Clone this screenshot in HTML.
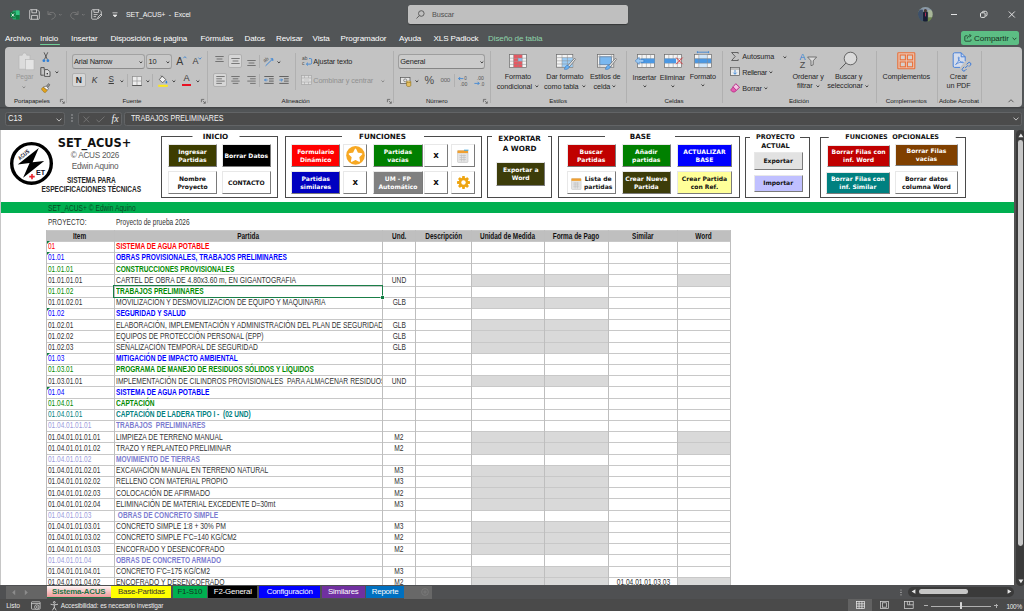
<!DOCTYPE html>
<html lang="es"><head><meta charset="utf-8"><title>SET_ACUS+ - Excel</title>
<style>
html,body{margin:0;padding:0}
body{width:1024px;height:611px;overflow:hidden;background:#525557;position:relative;font-family:"Liberation Sans",sans-serif;font-size:8px;color:#fff}
div,span{box-sizing:border-box}
.abs{position:absolute}
#titlebar{position:absolute;left:0;top:0;width:1024px;height:30px;background:#525557}
#search{position:absolute;left:407.5px;top:5px;width:220.5px;height:18.8px;background:#bfbfbf;border-radius:2.5px;box-shadow:0 1px 1px rgba(0,0,0,.35)}
#search span{position:absolute;left:24.5px;top:5px;font-size:7.3px;color:#505050;letter-spacing:-.1px}
.tt{position:absolute;white-space:nowrap;line-height:1}
#tabs .tt{top:35px;font-size:8.1px;color:#fff;letter-spacing:-.12px}
#ribbon{position:absolute;left:4.7px;top:47px;width:1017.3px;height:59.7px;background:#c3c3c3;border-radius:4px}
#rb .sep{position:absolute;top:50.5px;width:1px;height:52.5px;background:#b0b0b0}
#rb{position:absolute;left:0;top:0;width:1024px;height:110px}
#rb .lbl{position:absolute;top:98px;font-size:6.2px;color:#222;white-space:nowrap;transform:translateX(-50%);line-height:1;letter-spacing:-.05px}
#rb .t{position:absolute;font-size:7.25px;color:#262626;white-space:nowrap;line-height:1;letter-spacing:-.1px}
#rb .tc{position:absolute;font-size:7.25px;color:#262626;white-space:nowrap;line-height:1;transform:translateX(-50%);letter-spacing:-.1px;text-align:center}
#rb .dis{color:#8c8c8c}
#rb .box{position:absolute;background:#c8c8c8;border:1px solid #a2a2a2;border-radius:3px}
#rb .hi{position:absolute;background:#d6d6d6;border:1px solid #b0b0b0;border-radius:2px}
#rb svg{position:absolute;overflow:visible}
#fbar{position:absolute;left:0;top:107px;width:1024px;height:23px;background:linear-gradient(#3e4042,#515456 2.5px)}
#fbar .fb{position:absolute;top:4.8px;height:13.8px;background:#4b4b4b;border:1px solid #626466;border-radius:2.5px}
#sheet{position:absolute;left:1px;top:129.8px;width:1013.1px;height:456px;background:#fff;overflow:hidden}
#sheet>*{margin-left:-1px;margin-top:-129.8px}
#grid{position:absolute;left:0;top:0}
#greenbar{position:absolute;left:0;top:201.6px;width:1015px;height:11.6px;background:#00af50}
.nar{display:inline-block;transform:scaleX(.775);transform-origin:0 50%;white-space:nowrap}
.hrow{position:absolute;background:#bfbfbf}
.hc{position:absolute;text-align:center;font-size:8.3px;font-weight:bold;color:#111;line-height:12.4px;white-space:nowrap;overflow:hidden}
.hc span{display:inline-block;transform:scaleX(.775);transform-origin:50% 50%}
.gc{position:absolute;background:#d9d9d9}
.hl{position:absolute;height:1px;background:#c8c8c8}
.vl{position:absolute;width:1px;background:#bebebe}
.ci,.cp,.cu,.cs{position:absolute;height:11.2px;line-height:11.9px;font-size:8.3px;color:#323232;white-space:nowrap;clip-path:inset(-3px 0 -3px 0)}
.ci{left:48px;width:65.5px}
.cp{left:116px;width:266px}
.cu{left:383px;width:32px;text-align:center}
.cs{left:609px;width:68px;text-align:center}
.ci span,.cp span{display:inline-block;transform:translateY(.4px) scaleX(.782);transform-origin:0 50%}
.cp span{transform:translateY(.4px) scaleX(.792)}
.cp.l0 span{transform:translateY(.4px) scaleX(.816)}
.cu span,.cs span{display:inline-block;transform:translateY(.4px) scaleX(.8);transform-origin:50% 50%}
.cp.l1,.cp.l2,.cp.l3,.cp.l4,.cp.l5{font-weight:bold}
.l1{color:#ff0000}.l2{color:#0000ff}.l3{color:#008a00}.l4{color:#008080}.l5{color:#7b7bd0}
.ci.l5{color:#9c9cdc}
.tri{position:absolute;left:46.5px;width:0;height:0;border-top:3px solid #107c41;border-right:3px solid transparent}
.sel{position:absolute;border:1.1px solid #1a7f48}
.selh{position:absolute;width:2.8px;height:2.8px;background:#107c41;box-shadow:0 0 0 .5px #fff}
/* form controls */
.grp{position:absolute;border:1px solid #4a4a4a}
.gl{position:absolute;background:#fff;font-family:"DejaVu Sans","Liberation Sans",sans-serif;font-weight:bold;font-size:7.2px;color:#111;text-align:center;line-height:9px;white-space:nowrap;transform:translateX(-50%)}
.btn{position:absolute;font-family:"DejaVu Sans","Liberation Sans",sans-serif;font-weight:bold;font-size:6.05px;line-height:8px;color:#fff;text-align:center;display:flex;align-items:center;justify-content:center;border-top:1px solid #e8e8e8;border-left:1px solid #e8e8e8;border-right:1.5px solid #7a7a7a;border-bottom:1.5px solid #7a7a7a;white-space:nowrap}
.btn.w{background:#fff;color:#111}
#sbar{position:absolute;left:0;top:585.3px;width:1024px;height:13.5px;background:#4f5052}
.stab{position:absolute;top:586px;height:11.6px;font-size:7.9px;line-height:11.4px;text-align:center;white-space:nowrap;color:#fff;letter-spacing:-.2px}
#vscroll{position:absolute;left:1014.4px;top:129.6px;width:9.6px;height:456px;background:#525252}

</style></head>
<body>
<div id="titlebar">
<svg class="abs" style="left:10px;top:9.5px" width="10" height="10" viewBox="0 0 10 10"><rect x="2.5" y=".5" width="7" height="9" rx="1" fill="#21a366"/><rect x="6" y=".5" width="3.5" height="4.5" fill="#33c481"/><rect x="6" y="5" width="3.5" height="4.5" fill="#107c41"/><rect x="0" y="2.2" width="5.6" height="5.6" rx=".8" fill="#107c41"/><path d="M1.6 3.6 L4 6.5 M4 3.6 L1.6 6.5" stroke="#fff" stroke-width=".9"/></svg>
<svg class="abs" style="left:29px;top:9px" width="11" height="11" viewBox="0 0 11 11" fill="none" stroke="#dedede" stroke-width=".8"><path d="M.7 1.6a.9.9 0 0 1 .9-.9h6.6l2.1 2.1v6.6a.9.9 0 0 1-.9.9H1.6a.9.9 0 0 1-.9-.9z"/><path d="M2.9.8v3h4.6v-3M2.6 10.2V6.4h5.8v3.8"/></svg>
<svg class="abs" style="left:47px;top:10px" width="40" height="10" viewBox="0 0 40 10" fill="none" stroke="#7a7a7a" stroke-width=".9"><path d="M1 1v3.5h3.5M1.2 4.3C3 1.6 7.8 1.6 8.3 5.2 8.5 7 7 8.5 4.5 9.4"/><path d="M12 4l1.3 1.3L14.6 4"/><path d="M31 1v3.5h-3.5M30.8 4.3C29 1.6 24.2 1.6 23.7 5.2 23.5 7 25 8.5 27.5 9.4"/><path d="M35 4l1.3 1.3L37.6 4"/></svg>
<svg class="abs" style="left:91px;top:9px" width="11" height="11" viewBox="0 0 11 11" fill="none" stroke="#dedede" stroke-width=".8"><path d="M6 10.2H1.6a.9.9 0 0 1-.9-.9V1.6a.9.9 0 0 1 .9-.9h6.6l2.1 2.1v2.5"/><path d="M2.9.8v2.6h4.6V.8M2.6 5.6h4M2.6 7.6h2.5M6.5 9.8l.5-1.8 3-3 1 1-3 3z"/></svg>
<svg class="abs" style="left:111.5px;top:12px" width="6" height="6" viewBox="0 0 6 6" fill="none" stroke="#dedede" stroke-width=".8"><path d="M.5.8h5M1 3l2 2 2-2z" fill="#f0f0f0"/></svg>
<div class="tt" style="left:126px;top:11px;font-size:7px;color:#f4f4f4;letter-spacing:-.2px">SET_ACUS+ &nbsp;-&nbsp; Excel</div>
<div id="search"><svg class="abs" style="left:8.5px;top:5px" width="9" height="9" viewBox="0 0 9 9" fill="none" stroke="#555" stroke-width=".9"><circle cx="5.3" cy="3.5" r="2.8"/><path d="M3.3 5.6L.5 8.5"/></svg><span>Buscar</span></div>
<svg class="abs" style="left:918px;top:7.1px" width="14.8" height="14.8" viewBox="0 0 14 14"><defs><clipPath id="av"><circle cx="7" cy="7" r="7"/></clipPath></defs><g clip-path="url(#av)"><rect width="14" height="14" fill="#5f7458"/><rect x="0" y="0" width="14" height="4.5" fill="#8a98a8"/><rect x="0" y="2.5" width="4.6" height="11.5" fill="#3d4f6a"/><rect x="9.6" y="3" width="4.4" height="7" fill="#a9b79a"/><rect x="9.6" y="10" width="4.4" height="4" fill="#6f8a4a"/><rect x="4.8" y="4.6" width="4.4" height="9.4" rx="1" fill="#171d36"/><circle cx="7" cy="3.5" r="1.5" fill="#4a3a34"/><rect x="6.7" y="5.3" width=".8" height="3.6" fill="#c8305a"/></g></svg>
<svg class="abs" style="left:950px;top:10px" width="70" height="10" viewBox="0 0 70 10" fill="none" stroke="#f4f4f4" stroke-width=".9"><path d="M1 4.5h6"/><rect x="30.5" y="2.8" width="4.6" height="4.6" rx="1"/><path d="M32 2.6c.2-1 .8-1.3 1.6-1.3h1.9c1 0 1.5.6 1.5 1.5v1.9c0 .9-.5 1.4-1.3 1.5"/><path d="M58.8 1.5l6 6M64.8 1.5l-6 6"/></svg>
</div>
<div id="tabs">
<div class="tt" style="left:5px">Archivo</div>
<div class="tt" style="left:40px">Inicio</div>
<div class="abs" style="left:40px;top:44.2px;width:19.5px;height:1.3px;background:#6fcf97;border-radius:1px"></div>
<div class="tt" style="left:71px">Insertar</div>
<div class="tt" style="left:110.5px">Disposición de página</div>
<div class="tt" style="left:200.5px">Fórmulas</div>
<div class="tt" style="left:244.5px">Datos</div>
<div class="tt" style="left:276px">Revisar</div>
<div class="tt" style="left:312.5px">Vista</div>
<div class="tt" style="left:340.5px">Programador</div>
<div class="tt" style="left:399px">Ayuda</div>
<div class="tt" style="left:433.5px">XLS Padlock</div>
<div class="tt" style="left:488px;color:#8fd4aa">Diseño de tabla</div>
<div class="abs" style="left:961px;top:30.5px;width:58px;height:14.5px;background:#5cbe84;border-radius:2.5px"></div>
<svg class="abs" style="left:963.8px;top:33px" width="9" height="9" viewBox="0 0 9 9" fill="none" stroke="#1c3a28" stroke-width=".8"><path d="M3.5 2.8H1.6a.8.8 0 0 0-.8.8v3.8a.8.8 0 0 0 .8.8h4.6a.8.8 0 0 0 .8-.8V6.3"/><path d="M3.2 5.6c.3-2 1.6-2.9 3.4-2.9M5.4 1l1.6 1.7-1.6 1.7"/></svg>
<div class="tt" style="left:974.1px;top:34.7px;font-size:8.1px;color:#16301f;letter-spacing:-.1px">Compartir</div>
<svg class="abs" style="left:1012px;top:36.5px" width="5" height="4" viewBox="0 0 5 4" fill="none" stroke="#16301f" stroke-width=".8"><path d="M.6.8l1.9 1.9L4.4.8"/></svg>
</div>
<div id="ribbon"></div>
<div id="rb">
<svg width="0" height="0" style="position:absolute"><defs>
<path id="chv" d="M.5.5l1.4 1.4L3.3.5" fill="none" stroke="#303030" stroke-width=".95"/>
<g id="lnch" fill="none" stroke="#555" stroke-width=".7"><path d="M.4 3.2V.4h2.8"/><path d="M1.8 1.8l2.4 2.4M4.3 2.4v1.9H2.4" /></g>
</defs></svg>
<!-- Portapapeles -->
<svg style="left:17.5px;top:52px" width="17" height="19" viewBox="0 0 17 19"><path d="M1 3.2h3.3c.2-1.6 1-2.3 2.2-2.3s2 .7 2.2 2.3H12v14H1z" fill="#dcdcdc" stroke="#b4b4b4" stroke-width=".6"/><rect x="7.4" y="7.6" width="8.6" height="10.2" fill="#e4e4e4" stroke="#b4b4b4" stroke-width=".6"/></svg>
<div class="tc dis" style="left:24.6px;top:73.8px;font-size:6.7px;color:#969696">Pegar</div>
<svg style="left:22.4px;top:85.6px" width="4" height="3" viewBox="0 0 4 3"><use href="#chv" style="opacity:.45"/></svg>
<svg style="left:42px;top:51.8px" width="8" height="11" viewBox="0 0 8 11"><path d="M2 .3l3.4 7.2M5.8.3L2.4 7.5" stroke="#3a3a3a" stroke-width=".75" fill="none"/><circle cx="1.9" cy="8.7" r="1.4" fill="#2f7fd6"/><circle cx="5.9" cy="8.7" r="1.4" fill="#2f7fd6"/></svg>
<svg style="left:40px;top:67px" width="11" height="10" viewBox="0 0 11 10" fill="none" stroke="#3a3a3a" stroke-width=".8"><path d="M3.8 8.2H.8V.6h3.4v2"/><path d="M4.6 2.6h3.2l2.2 2.2v4.6H4.6z" fill="#d8d8d8"/><rect x="6.6" y="6" width="1.4" height="1.4" fill="#3a3a3a" stroke="none"/></svg>
<svg style="left:54.8px;top:71.3px" width="4" height="3" viewBox="0 0 4 3"><use href="#chv"/></svg>
<svg style="left:41px;top:82.5px" width="10" height="10" viewBox="0 0 10 10"><path d="M7.6.6l1.2 1.2-1.9 2.8-1.6-1.2z" fill="#9a9a9a" stroke="#4a4a4a" stroke-width=".6"/><path d="M2.2 4.2l3.2-1.2 2 2.6-1.2 1.8z" fill="#f4f4f4" stroke="#4a4a4a" stroke-width=".6"/><path d="M.4 5.8l1.8-1.6 4 3.2-2 2.3c-1.6-.5-3-2-3.8-3.9z" fill="#e3a21a" stroke="#8a6410" stroke-width=".5"/></svg>
<div class="lbl" style="left:31.9px">Portapapeles</div>
<svg style="left:60.3px;top:98.6px" width="5" height="5" viewBox="0 0 5 5"><use href="#lnch"/></svg>
<div class="sep" style="left:66px"></div>
<!-- Fuente -->
<div class="box" style="left:71.5px;top:54.4px;width:73px;height:14.2px;border-bottom-color:#8c8c8c"></div>
<div class="t" style="left:74px;top:57.8px;font-size:7.4px;letter-spacing:-.2px">Arial Narrow</div>
<svg style="left:139.2px;top:60.6px" width="4" height="3" viewBox="0 0 4 3"><use href="#chv"/></svg>
<div class="box" style="left:146.3px;top:54.4px;width:25.4px;height:14.2px;border-bottom-color:#8c8c8c"></div>
<div class="t" style="left:148.4px;top:57.8px;font-size:7.4px">10</div>
<svg style="left:166.2px;top:60.6px" width="4" height="3" viewBox="0 0 4 3"><use href="#chv"/></svg>
<div class="t" style="left:176.2px;top:55.6px;font-size:10.5px;color:#3a3a3a">A</div>
<svg style="left:183.4px;top:56.2px" width="4" height="3" viewBox="0 0 4 3"><path d="M.4 2.2L1.9.6l1.5 1.6" fill="none" stroke="#2f7fd6" stroke-width=".8"/></svg>
<div class="t" style="left:192.4px;top:57px;font-size:9px;color:#3a3a3a">A</div>
<svg style="left:198.2px;top:56.6px" width="4" height="3" viewBox="0 0 4 3"><path d="M.4.6l1.5 1.6L3.4.6" fill="none" stroke="#2f7fd6" stroke-width=".8"/></svg>
<div class="hi" style="left:71.5px;top:73.2px;width:14.8px;height:14px"></div>
<div class="t" style="left:75.8px;top:76px;font-size:8.5px;font-weight:bold;color:#2a2a2a">N</div>
<div class="t" style="left:91.8px;top:76px;font-size:8.5px;font-style:italic;color:#3a3a3a">K</div>
<div class="t" style="left:108.5px;top:76px;font-size:8.2px;color:#3a3a3a;text-decoration:underline">S</div>
<svg style="left:119.5px;top:79.6px" width="4" height="3" viewBox="0 0 4 3"><use href="#chv"/></svg>
<div class="sep" style="left:127px;top:74px;height:13px"></div>
<svg style="left:131.5px;top:75.5px" width="10" height="10" viewBox="0 0 10 10" fill="none"><rect x=".5" y=".5" width="9" height="9" fill="#ececec" stroke="#8c8c8c" stroke-width=".7"/><path d="M5 .5v9M.5 5h9" stroke="#9a9a9a" stroke-width=".7"/><path d="M.2 9.5h9.6" stroke="#444" stroke-width=".8"/></svg>
<svg style="left:145.8px;top:79.6px" width="4" height="3" viewBox="0 0 4 3"><use href="#chv"/></svg>
<div class="sep" style="left:152px;top:74px;height:13px"></div>
<svg style="left:157.5px;top:74.5px" width="10" height="12" viewBox="0 0 10 12"><path d="M4.2 1l3.6 3.6-3.2 3.2L1.4 4.6z" fill="#f2f2f2" stroke="#4a4a4a" stroke-width=".8" stroke-linejoin="round"/><path d="M3 .6l1.6 1.6" stroke="#4a4a4a" stroke-width=".8"/><path d="M8.4 5.6c.6.9.9 1.4.9 1.9a.9.9 0 0 1-1.8 0c0-.5.3-1 .9-1.9z" fill="#2f7fd6"/><rect x=".2" y="9.8" width="9.6" height="2" fill="#ffe81a"/></svg>
<svg style="left:171.5px;top:79.6px" width="4" height="3" viewBox="0 0 4 3"><use href="#chv"/></svg>
<div class="t" style="left:183.6px;top:74.2px;font-size:9.2px;color:#3a3a3a">A</div>
<div class="abs" style="left:181.8px;top:84.3px;width:9.6px;height:2px;background:#e81123"></div>
<svg style="left:196.3px;top:79.6px" width="4" height="3" viewBox="0 0 4 3"><use href="#chv"/></svg>
<div class="lbl" style="left:132px">Fuente</div>
<svg style="left:200.8px;top:98.6px" width="5" height="5" viewBox="0 0 5 5"><use href="#lnch"/></svg>
<div class="sep" style="left:207px"></div>
<!-- Alineacion -->
<svg style="left:215.2px;top:56px" width="9" height="7" viewBox="0 0 9 7" stroke="#505050" stroke-width=".7"><path d="M.3.5h8.4M1.6 3h5.8M.3 5.5h8.4"/></svg>
<div class="hi" style="left:228.3px;top:54.2px;width:14px;height:14px"></div>
<svg style="left:230.8px;top:57.8px" width="9" height="7" viewBox="0 0 9 7" stroke="#505050" stroke-width=".7"><path d="M.3.5h8.4M1.6 3h5.8M.3 5.5h8.4"/></svg>
<svg style="left:247px;top:60px" width="9" height="7" viewBox="0 0 9 7" stroke="#505050" stroke-width=".7"><path d="M.3.5h8.4M1.6 3h5.8M.3 5.5h8.4"/></svg>
<div class="sep" style="left:259px;top:55px;height:13px"></div>
<svg style="left:263px;top:55.5px" width="12" height="11" viewBox="0 0 12 11" fill="none"><text x=".2" y="5.2" font-family="Liberation Sans, sans-serif" font-size="5" fill="#4a4a4a" transform="rotate(-35 3 4)">ab</text><path d="M2.6 9.8L9.6 3" stroke="#2f7fd6" stroke-width=".9"/><path d="M7.6 2.8h2.2V5" stroke="#2f7fd6" stroke-width=".9"/></svg>
<svg style="left:276.6px;top:60.6px" width="4" height="3" viewBox="0 0 4 3"><use href="#chv"/></svg>
<div class="hi" style="left:212.8px;top:73.2px;width:14.4px;height:14px"></div>
<svg style="left:215.5px;top:76.2px" width="9" height="8" viewBox="0 0 9 8" stroke="#505050" stroke-width=".7"><path d="M.3.5h8.4M.3 2.8h5.6M.3 5.1h8.4M.3 7.4h5.6"/></svg>
<svg style="left:231.3px;top:76.2px" width="9" height="8" viewBox="0 0 9 8" stroke="#505050" stroke-width=".7"><path d="M.3.5h8.4M1.7 2.8h5.6M.3 5.1h8.4M1.7 7.4h5.6"/></svg>
<svg style="left:247px;top:76.2px" width="9" height="8" viewBox="0 0 9 8" stroke="#505050" stroke-width=".7"><path d="M.3.5h8.4M3.1 2.8h5.6M.3 5.1h8.4M3.1 7.4h5.6"/></svg>
<div class="sep" style="left:259px;top:74px;height:13px"></div>
<svg style="left:263.5px;top:76.2px" width="10" height="8" viewBox="0 0 10 8" fill="none"><path d="M.3.5h9.4M5 2.8h4.7M5 5.1h4.7M.3 7.4h9.4" stroke="#4a4a4a" stroke-width=".8"/><path d="M3.6 4H.6M1.9 2.6L.5 4l1.4 1.4" stroke="#2f7fd6" stroke-width=".8"/></svg>
<svg style="left:279.3px;top:76.2px" width="10" height="8" viewBox="0 0 10 8" fill="none"><path d="M.3.5h9.4M5 2.8h4.7M5 5.1h4.7M.3 7.4h9.4" stroke="#4a4a4a" stroke-width=".8"/><path d="M.4 4h3M2.1 2.6L3.5 4 2.1 5.4" stroke="#2f7fd6" stroke-width=".8"/></svg>
<div class="sep" style="left:294.5px;top:53px;height:37px"></div>
<svg style="left:302px;top:56px" width="10" height="11" viewBox="0 0 10 11" fill="none"><text x="0" y="4.2" font-family="Liberation Sans, sans-serif" font-size="4.8" fill="#4a4a4a">ab</text><text x="0" y="9.3" font-family="Liberation Sans, sans-serif" font-size="4.8" fill="#4a4a4a">c</text><path d="M7 2.5h1.4a1.3 1.3 0 0 1 1.3 1.3v3a1.3 1.3 0 0 1-1.3 1.3H4.6M6 6.6L4.4 8.1 6 9.6" stroke="#2f7fd6" stroke-width=".8"/></svg>
<div class="t" style="left:313.3px;top:58px">Ajustar texto</div>
<svg style="left:301.3px;top:75.2px" width="11" height="10" viewBox="0 0 11 10" fill="none"><rect x=".5" y=".5" width="10" height="9" fill="#dcdcdc" stroke="#a6a6a6" stroke-width=".7"/><path d="M.5 3h10M.5 7h10M3.5.5V3M7.5.5V3M3.5 7v2.5M7.5 7v2.5" stroke="#a6a6a6" stroke-width=".6"/><path d="M3 5h5" stroke="#bbb" stroke-width=".7"/></svg>
<div class="t dis" style="left:313.3px;top:77.2px;color:#909090">Combinar y centrar</div>
<svg style="left:381.4px;top:79.6px" width="4" height="3" viewBox="0 0 4 3"><use href="#chv" style="opacity:.45"/></svg>
<div class="lbl" style="left:295.6px">Alineación</div>
<svg style="left:386.8px;top:98.6px" width="5" height="5" viewBox="0 0 5 5"><use href="#lnch"/></svg>
<div class="sep" style="left:392.5px"></div>
<!-- Numero -->
<div class="box" style="left:398.3px;top:54.4px;width:87.2px;height:14.2px;background:#cbcbcb;border-color:#9e9e9e;border-bottom-color:#858585"></div>
<div class="t" style="left:400.3px;top:57.8px;font-size:7.4px;letter-spacing:-.2px">General</div>
<svg style="left:479.6px;top:60.6px" width="4" height="3" viewBox="0 0 4 3"><use href="#chv"/></svg>
<svg style="left:400px;top:76.5px" width="12" height="10" viewBox="0 0 12 10"><rect x=".4" y=".4" width="9.6" height="6" fill="#e4e4e4" stroke="#555" stroke-width=".7"/><circle cx="5.2" cy="3.4" r="1.5" fill="none" stroke="#555" stroke-width=".6"/><path d="M6.6 4.8h4.2v3.8c0 .5-.9.9-2.1.9s-2.1-.4-2.1-.9z" fill="#e8c060" stroke="#8a6a14" stroke-width=".6"/><ellipse cx="8.7" cy="4.8" rx="2.1" ry=".8" fill="#f6dc90" stroke="#8a6a14" stroke-width=".5"/></svg>
<svg style="left:414.7px;top:79.6px" width="4" height="3" viewBox="0 0 4 3"><use href="#chv"/></svg>
<div class="t" style="left:424.5px;top:74.9px;font-size:10.8px;color:#4c4c4c">%</div>
<div class="t" style="left:440.5px;top:77.4px;font-size:6.2px;color:#666;letter-spacing:-.3px">000</div>
<div class="sep" style="left:454px;top:74px;height:13px"></div>
<svg style="left:458px;top:75.5px" width="10" height="10" viewBox="0 0 10 10" fill="none"><text x="6.2" y="4.2" font-family="Liberation Sans, sans-serif" font-size="4.6" fill="#555">0</text><text x="2.2" y="9.6" font-family="Liberation Sans, sans-serif" font-size="4.6" fill="#555" textLength="7.2" lengthAdjust="spacingAndGlyphs">.00</text><path d="M5.4 2.6H.6M2.2 1L.6 2.6l1.6 1.6" stroke="#2f7fd6" stroke-width=".8"/></svg>
<svg style="left:473.5px;top:75.5px" width="10" height="10" viewBox="0 0 10 10" fill="none"><text x="2.8" y="4.2" font-family="Liberation Sans, sans-serif" font-size="4.6" fill="#555" textLength="7" lengthAdjust="spacingAndGlyphs">.00</text><text x="6.4" y="9.6" font-family="Liberation Sans, sans-serif" font-size="4.6" fill="#555">.0</text><path d="M.4 7.4h4.8M3.6 5.8l1.6 1.6-1.6 1.6" stroke="#2f7fd6" stroke-width=".8"/></svg>
<div class="lbl" style="left:436.8px">Número</div>
<svg style="left:483.3px;top:98.6px" width="5" height="5" viewBox="0 0 5 5"><use href="#lnch"/></svg>
<div class="sep" style="left:490px"></div>
<!-- Estilos -->
<svg style="left:509px;top:53.5px" width="18" height="14" viewBox="0 0 18 14"><rect x=".4" y=".4" width="17.2" height="13.2" fill="#f4f4f4" stroke="#6a6a6a" stroke-width=".7"/><rect x="4.6" y=".8" width="8.6" height="3.4" fill="#ea5560"/><rect x="4.6" y="4.2" width="4.4" height="3" fill="#ea5560"/><rect x="9" y="4.2" width="4.2" height="3" fill="#8cc0f0"/><rect x="4.6" y="7.2" width="8.6" height="6" fill="#ea5560"/><path d="M.4 4.2h17.2M.4 7.2h17.2M.4 10.4h17.2M4.6.4v13.2M9 .4v13.2M13.2.4v13.2" stroke="#8a8a8a" stroke-width=".5" fill="none"/></svg>
<div class="tc" style="left:517.9px;top:72.9px">Formato</div>
<div class="tc" style="left:514.4px;top:82.6px">condicional</div>
<svg style="left:534.8px;top:84.8px" width="4" height="3" viewBox="0 0 4 3"><use href="#chv"/></svg>
<svg style="left:556px;top:53.5px" width="20" height="17" viewBox="0 0 20 17"><rect x=".4" y=".4" width="16.4" height="12.8" fill="#f4f4f4" stroke="#6a6a6a" stroke-width=".7"/><rect x="6" y="3.6" width="10.6" height="9.4" fill="#9cccf4"/><path d="M.4 3.6h16.4M.4 6.8h16.4M.4 10h16.4M6 .4v12.8M11.4.4v12.8" stroke="#8a8a8a" stroke-width=".5" fill="none"/><path d="M18.6 4.2l-6.6 7.2 1.4 1.4 6.2-7.6z" fill="#e8e8e8" stroke="#555" stroke-width=".6"/><path d="M12 11.4c-1.6-.2-2.6.8-2.8 2.2-.1.8-.6 1.2-1.2 1.4 1.8 1 4.6.4 5.4-2.2z" fill="#6ab0ee" stroke="#2a6cb8" stroke-width=".5"/></svg>
<div class="tc" style="left:564.9px;top:72.9px">Dar formato</div>
<div class="tc" style="left:561.3px;top:82.6px">como tabla</div>
<svg style="left:581.6px;top:84.8px" width="4" height="3" viewBox="0 0 4 3"><use href="#chv"/></svg>
<svg style="left:596.5px;top:53.5px" width="20" height="17" viewBox="0 0 20 17"><rect x=".4" y=".4" width="16.4" height="12.8" fill="#f4f4f4" stroke="#6a6a6a" stroke-width=".7"/><rect x="2.8" y="2.8" width="11.6" height="8" fill="#7ab8f0" stroke="#2a6cb8" stroke-width=".5"/><path d="M2.8.4v12.8M14.4.4v12.8M.4 2.8h16.4M.4 10.8h16.4" stroke="#8a8a8a" stroke-width=".5" fill="none"/><path d="M18.6 4.2l-6.6 7.2 1.4 1.4 6.2-7.6z" fill="#e8e8e8" stroke="#555" stroke-width=".6"/><path d="M12 11.4c-1.6-.2-2.6.8-2.8 2.2-.1.8-.6 1.2-1.2 1.4 1.8 1 4.6.4 5.4-2.2z" fill="#6ab0ee" stroke="#2a6cb8" stroke-width=".5"/></svg>
<div class="tc" style="left:605.3px;top:72.9px">Estilos de</div>
<div class="tc" style="left:601.9px;top:82.6px">celda</div>
<svg style="left:612.3px;top:84.8px" width="4" height="3" viewBox="0 0 4 3"><use href="#chv"/></svg>
<div class="lbl" style="left:558.1px">Estilos</div>
<div class="sep" style="left:626.3px"></div>
<!-- Celdas -->
<svg style="left:634.5px;top:53.5px" width="20" height="14" viewBox="0 0 20 14"><rect x="2.4" y=".4" width="17.2" height="13.2" fill="#f4f4f4" stroke="#6a6a6a" stroke-width=".7"/><path d="M2.4 4.6h17.2M2.4 9.2h17.2M7 .4v13.2M11.4.4v13.2M15.6.4v13.2" stroke="#8a8a8a" stroke-width=".5" fill="none"/><rect x="6" y="4.6" width="13.6" height="4.6" fill="#4a98e4"/><path d="M.2 6.9l4-3.6v2.2h4.6v2.8H4.2v2.2z" fill="#9ccaf4" stroke="#2a6cb8" stroke-width=".5"/></svg>
<div class="tc" style="left:644.4px;top:73.6px">Insertar</div>
<svg style="left:642.6px;top:84.8px" width="4" height="3" viewBox="0 0 4 3"><use href="#chv"/></svg>
<svg style="left:663.8px;top:53.5px" width="19" height="14" viewBox="0 0 19 14"><rect x=".4" y=".4" width="17.2" height="13.2" fill="#f4f4f4" stroke="#6a6a6a" stroke-width=".7"/><path d="M.4 4.6h17.2M.4 9.2h17.2M4.8.4v13.2M9.2.4v13.2M13.4.4v13.2" stroke="#8a8a8a" stroke-width=".5" fill="none"/><rect x=".4" y="4.6" width="11.6" height="4.6" fill="#4a98e4"/><path d="M12.2 3.6l6.4 6.6M18.6 3.6l-6.4 6.6" stroke="#d8343c" stroke-width="1" fill="none"/></svg>
<div class="tc" style="left:672.4px;top:73.6px">Eliminar</div>
<svg style="left:670.6px;top:84.8px" width="4" height="3" viewBox="0 0 4 3"><use href="#chv"/></svg>
<svg style="left:694px;top:50.5px" width="18" height="17" viewBox="0 0 18 17"><path d="M3.4 1.2h11.2M3.4.2v2M14.6.2v2" stroke="#2f7fd6" stroke-width=".8" fill="none"/><rect x=".4" y="3.4" width="17.2" height="13.2" fill="#f4f4f4" stroke="#6a6a6a" stroke-width=".7"/><rect x="4.8" y="3.8" width="8.6" height="12.4" fill="#d0e6fa"/><rect x=".8" y="7.6" width="16.4" height="4.6" fill="#4a98e4"/><path d="M.4 7.6h17.2M.4 12.2h17.2M4.8 3.4v13.2M13.4 3.4v13.2" stroke="#8a8a8a" stroke-width=".5" fill="none"/></svg>
<div class="tc" style="left:702.8px;top:72.9px">Formato</div>
<svg style="left:701px;top:84.4px" width="4" height="3" viewBox="0 0 4 3"><use href="#chv"/></svg>
<div class="lbl" style="left:674px">Celdas</div>
<div class="sep" style="left:721.8px"></div>
<!-- Edicion -->
<svg style="left:731px;top:52.3px" width="8" height="9" viewBox="0 0 8 9" fill="none"><path d="M7.2 1.8V.5H.6l3.6 4-3.6 4h6.6V7.2" stroke="#4a4a4a" stroke-width=".8"/></svg>
<div class="t" style="left:742.3px;top:53.3px">Autosuma</div>
<svg style="left:782.5px;top:55.6px" width="4" height="3" viewBox="0 0 4 3"><use href="#chv"/></svg>
<svg style="left:730px;top:67.4px" width="10" height="9" viewBox="0 0 10 9" fill="none"><rect x=".4" y=".4" width="9.2" height="8.2" fill="#ececec" stroke="#555" stroke-width=".7"/><path d="M.4 2h9.2" stroke="#555" stroke-width=".6"/><path d="M5 3v4.2M3.3 5.6L5 7.3l1.7-1.7" stroke="#2f7fd6" stroke-width=".8"/></svg>
<div class="t" style="left:742.3px;top:68.9px;letter-spacing:-.3px">Rellenar</div>
<svg style="left:769px;top:71.4px" width="4" height="3" viewBox="0 0 4 3"><use href="#chv"/></svg>
<svg style="left:730px;top:83px" width="10" height="10" viewBox="0 0 10 10"><path d="M5.8.8l3.6 3.4-4.6 4.8H2.6L.6 7z" fill="#e45cb0" stroke="#b01c7c" stroke-width=".7" stroke-linejoin="round"/><path d="M3 3.8l3.4 3.4" stroke="#c0208a" stroke-width=".7"/><path d="M5.8.8l3.6 3.4-3 3.1L3 3.8z" fill="#f2c4e2" stroke="#b01c7c" stroke-width=".7" stroke-linejoin="round"/></svg>
<div class="t" style="left:742.3px;top:84.6px">Borrar</div>
<svg style="left:763.7px;top:87px" width="4" height="3" viewBox="0 0 4 3"><use href="#chv"/></svg>
<svg style="left:799px;top:52px" width="19" height="17" viewBox="0 0 19 17" fill="none"><text x=".4" y="7.6" font-family="Liberation Sans, sans-serif" font-size="9" fill="#2f7fd6">A</text><text x=".8" y="16.2" font-family="Liberation Sans, sans-serif" font-size="9" fill="#4a4a4a">Z</text><path d="M8.6 5h9l-3.4 3.8v4l-2.2.9V8.8z" fill="#dcdcdc" stroke="#4a4a4a" stroke-width=".7" stroke-linejoin="round"/></svg>
<div class="tc" style="left:808.1px;top:73.3px">Ordenar y</div>
<div class="tc" style="left:804.8px;top:82.4px">filtrar</div>
<svg style="left:815.6px;top:84.8px" width="4" height="3" viewBox="0 0 4 3"><use href="#chv"/></svg>
<svg style="left:839px;top:51px" width="20" height="19" viewBox="0 0 20 19" fill="none"><circle cx="11.5" cy="7.5" r="6.3" fill="#dadada" stroke="#4a4a4a" stroke-width=".8"/><path d="M6.9 12.1L1 18.2" stroke="#4a4a4a" stroke-width=".9"/></svg>
<div class="tc" style="left:848.6px;top:73.3px">Buscar y</div>
<div class="tc" style="left:845px;top:82.4px">seleccionar</div>
<svg style="left:864.8px;top:84.8px" width="4" height="3" viewBox="0 0 4 3"><use href="#chv"/></svg>
<div class="lbl" style="left:799px">Edición</div>
<div class="sep" style="left:875.5px"></div>
<!-- Complementos -->
<svg style="left:897px;top:52px" width="19" height="18" viewBox="0 0 19 18" fill="none" stroke="#e8703a" stroke-width="1.1"><rect x=".8" y=".8" width="17" height="16" rx=".6" fill="#ecc4b0"/><rect x="3.2" y="3" width="5.2" height="4.8" fill="#d8d0cc"/><rect x="10.4" y="3" width="5.2" height="4.8" fill="#d8d0cc"/><rect x="3.2" y="10" width="5.2" height="4.8" fill="#d8d0cc"/><rect x="10.4" y="10" width="5.2" height="4.8" fill="#d8d0cc"/></svg>
<div class="tc" style="left:906.3px;top:72.6px">Complementos</div>
<div class="lbl" style="left:906.3px">Complementos</div>
<div class="sep" style="left:936.7px"></div>
<!-- Acrobat -->
<svg style="left:952px;top:52px" width="19" height="19" viewBox="0 0 19 19" fill="none" stroke="#3a78d8" stroke-width=".9"><path d="M8 15.4H2.6a1.4 1.4 0 0 1-1.4-1.4V2.2A1.4 1.4 0 0 1 2.6.8h6.6l4 4v4.4" fill="#d4dcec"/><path d="M9.2.8v4h4"/><path d="M3.8 12.2c1.8-1.4 3.2-4 3.4-6.4.1-1-1-1-1 0 .2 2.4 2.2 4.6 4.6 5 .9.1.9-.8 0-.8-2.2 0-4.8.8-6.6 2.2-.6.5-.9.4-.4 0z" stroke-width=".7"/><path d="M12.2 14.8l-1.5 1.5a1.6 1.6 0 0 0 2.3 2.3l1.5-1.5M14.6 12.4l1.5-1.5a1.6 1.6 0 0 1 2.3 2.3l-1.5 1.5M13.2 16l2.8-2.8" stroke-width="1"/></svg>
<div class="tc" style="left:958.6px;top:72.6px">Crear</div>
<div class="tc" style="left:958.6px;top:82.4px">un PDF</div>
<div class="lbl" style="left:959px">Adobe Acrobat</div>
<div class="sep" style="left:981px"></div>
<svg style="left:1008px;top:98.8px" width="6" height="4" viewBox="0 0 6 4" fill="none"><path d="M.5 3.2L3 .7l2.5 2.5" stroke="#444" stroke-width=".8"/></svg>
</div>
<div id="fbar">
<div class="fb" style="left:4.8px;width:60.6px"></div>
<div class="tt" style="left:7.8px;top:8.2px;font-size:8.2px;color:#f2f2f2;transform:scaleX(.94);transform-origin:0 50%">C13</div>
<svg class="abs" style="left:56.2px;top:10.6px" width="6" height="4" viewBox="0 0 6 4" fill="none"><path d="M.5.6L3 3.1 5.5.6" stroke="#e0e0e0" stroke-width=".8"/></svg>
<svg class="abs" style="left:71px;top:6.5px" width="2" height="9" viewBox="0 0 2 9" fill="#bdbdbd"><circle cx="1" cy="1" r=".7"/><circle cx="1" cy="4" r=".7"/><circle cx="1" cy="7" r=".7"/></svg>
<div class="fb" style="left:77.6px;width:44px"></div>
<svg class="abs" style="left:82.5px;top:8.5px" width="24" height="7" viewBox="0 0 24 7" fill="none" stroke="#7c7c7c" stroke-width=".8"><path d="M.5.5l5.6 5.8M6.1.5L.5 6.3"/><path d="M13.5 3.6l2.3 2.5L21.5.6"/></svg>
<div class="tt" style="left:111.4px;top:6.8px;font-family:'Liberation Serif',serif;font-style:italic;font-size:10px;color:#f0f0f0">fx</div>
<div class="fb" style="left:124.4px;width:897.4px"></div>
<div class="tt" style="left:131px;top:8.2px;font-size:8.2px;color:#f2f2f2;transform:scaleX(.868);transform-origin:0 50%">TRABAJOS PRELIMINARES</div>
<svg class="abs" style="left:1013px;top:10.4px" width="6" height="4" viewBox="0 0 6 4" fill="none"><path d="M.5.6L3 3.1 5.5.6" stroke="#e0e0e0" stroke-width=".8"/></svg>
</div>
<div id="sheet">
<svg class="abs" style="left:9px;top:141px" width="45" height="45" viewBox="0 0 45 45">
<circle cx="22.5" cy="22.4" r="19.8" fill="#fff" stroke="#000" stroke-width="3.4"/>
<path d="M29.8 7.1 L8.7 23.4 L20.6 21.9 L14.1 36.7 L35.2 19.9 L23.6 21.3 Z" fill="#000"/>
<text transform="translate(10.9 19.4) rotate(-40)" font-family="Liberation Sans, sans-serif" font-weight="bold" font-size="5.8" fill="#12122a" textLength="13" lengthAdjust="spacingAndGlyphs">ACUS</text>
<text x="27" y="34.2" font-family="Liberation Sans, sans-serif" font-weight="bold" font-size="7.8" fill="#12122a" textLength="9.2" lengthAdjust="spacingAndGlyphs">ET</text>
<path d="M20.3 35.6h5.4M23 32.9v5.4" stroke="#e8202a" stroke-width="1.6"/>
</svg>
<div class="abs" style="left:40px;top:135.5px;width:109px;text-align:center;font-family:'DejaVu Sans','Liberation Sans',sans-serif;font-weight:bold;font-size:11.4px;line-height:14px;color:#111;white-space:nowrap">SET_ACUS+</div>
<div class="abs" style="left:40px;top:149.5px;width:110px;text-align:center;font-size:8.2px;line-height:11.2px;color:#5a5a5a;white-space:nowrap;letter-spacing:-.25px">© ACUS 2026<br>Edwin Aquino</div>
<div class="abs" style="left:29px;top:175.6px;width:120px;text-align:center;font-size:8.2px;font-weight:bold;line-height:9.2px;color:#262626;white-space:nowrap"><span class="nar" style="transform-origin:50% 50%;transform:scaleX(.8)">SISTEMA PARA<br>ESPECIFICACIONES TÉCNICAS</span></div>
<div id="greenbar"></div>
<div class="abs" style="left:47.6px;top:202.5px;font-size:8.2px;line-height:11px;color:#0a4a25;white-space:nowrap"><span class="nar" style="transform:scaleX(.81)">SET_ACUS+ © Edwin Aquino</span></div>
<div class="abs" style="left:47.6px;top:216.6px;font-size:8.2px;line-height:11px;color:#333;white-space:nowrap"><span class="nar" style="transform:scaleX(.8)">PROYECTO:</span></div>
<div class="abs" style="left:116px;top:216.6px;font-size:8.2px;line-height:11px;color:#333;white-space:nowrap"><span class="nar" style="transform:scaleX(.8)">Proyecto de prueba 2026</span></div>

<!-- INICIO -->
<div class="grp" style="left:161px;top:136.2px;width:117px;height:62.2px"></div>
<div class="gl" style="left:215.5px;top:132.4px;width:47px">INICIO</div>
<div class="btn" style="left:168px;top:144.3px;width:49px;height:23px;background:#3d3d00">Ingresar<br>Partidas</div>
<div class="btn" style="left:221.8px;top:144.3px;width:49px;height:23px;background:#000">Borrar Datos</div>
<div class="btn w" style="left:168px;top:171px;width:49px;height:23.4px">Nombre<br>Proyecto</div>
<div class="btn w" style="left:221.8px;top:171px;width:49px;height:23.4px">CONTACTO</div>

<!-- FUNCIONES -->
<div class="grp" style="left:284.6px;top:136.2px;width:197.6px;height:62.2px"></div>
<div class="gl" style="left:382.5px;top:131.8px;width:82px">FUNCIONES</div>
<div class="btn" style="left:291.3px;top:144.3px;width:48.8px;height:23px;background:#ff0000">Formulario<br>Dinámico</div>
<div class="btn w" style="left:343px;top:144.3px;width:24.4px;height:23px"></div>
<svg class="abs" style="left:345.7px;top:146px" width="19" height="19" viewBox="0 0 19 19"><circle cx="9.5" cy="9.4" r="9.3" fill="#f7a823"/><path d="M9.5 3.4l1.9 3.9 4.2.6-3.1 3 .8 4.2-3.8-2-3.8 2 .8-4.2-3.1-3 4.2-.6z" fill="#fff" stroke="#fff" stroke-width="1.5" stroke-linejoin="round"/></svg>
<div class="btn" style="left:373.3px;top:144.3px;width:49.3px;height:23px;background:#008000">Partidas<br>vacías</div>
<div class="btn w" style="left:424.2px;top:144.3px;width:23.8px;height:23px;font-size:8.6px;padding-bottom:1px">x</div>
<div class="btn w" style="left:450.8px;top:144.3px;width:24.2px;height:23px"></div>
<svg class="abs" style="left:457px;top:149px" width="12" height="14" viewBox="0 0 12 14"><rect x=".5" y="1.5" width="10.5" height="12" rx="1" fill="#e4e4e4" stroke="#c4c4c4" stroke-width=".6"/><rect x=".5" y="1.5" width="10.5" height="2.6" fill="#f0a030"/><path d="M7 1.2h4.5" stroke="#3aa0d8" stroke-width="1"/><path d="M2.5 6.5h6.5M2.5 8.5h6.5M2.5 10.5h6.5M4.5 5.5v7M7 5.5v7" stroke="#bdbdbd" stroke-width=".6"/></svg>
<div class="btn" style="left:291.3px;top:171px;width:48.8px;height:23.4px;background:#0000c0">Partidas<br>similares</div>
<div class="btn w" style="left:343px;top:171px;width:24.4px;height:23.4px;font-size:8.6px;padding-bottom:1px">x</div>
<div class="btn" style="left:373.3px;top:171px;width:49.3px;height:23.4px;background:#808080">UM - FP<br>Automático</div>
<div class="btn w" style="left:424.2px;top:171px;width:23.8px;height:23.4px;font-size:8.6px;padding-bottom:1px">x</div>
<div class="btn w" style="left:450.8px;top:171px;width:24.2px;height:23.4px"></div>
<svg class="abs" style="left:456.7px;top:175.6px" width="13" height="13" viewBox="0 0 13 13"><g fill="#eea512"><circle cx="6.5" cy="6.5" r="4.8"/><g id="gt"><rect x="5.1" y="0" width="2.8" height="13" rx=".7"/><rect x="0" y="5.1" width="13" height="2.8" rx=".7"/></g><use href="#gt" transform="rotate(45 6.5 6.5)"/></g><circle cx="6.5" cy="6.5" r="2.2" fill="#fff"/></svg>

<!-- EXPORTAR A WORD -->
<div class="grp" style="left:487.4px;top:136.2px;width:64.4px;height:62.2px"></div>
<div class="gl" style="left:519.6px;top:133.5px;width:56px;line-height:10.2px">EXPORTAR<br>A WORD</div>
<div class="btn" style="left:496.3px;top:162.4px;width:48.8px;height:23.3px;background:#3d3d0a">Exportar a<br>Word</div>

<!-- BASE -->
<div class="grp" style="left:557.8px;top:136.2px;width:182px;height:62.2px"></div>
<div class="gl" style="left:640.3px;top:131.6px;width:70px">BASE</div>
<div class="btn" style="left:566.5px;top:144.2px;width:49.4px;height:23px;background:#c00000">Buscar<br>Partidas</div>
<div class="btn" style="left:621.6px;top:144.2px;width:49.4px;height:23px;background:#008000">Añadir<br>partidas</div>
<div class="btn" style="left:676.7px;top:144.2px;width:55.6px;height:23px;background:#0000ff">ACTUALIZAR<br>BASE</div>
<div class="btn w" style="left:566.5px;top:171px;width:49.4px;height:23.2px;padding-left:14px">Lista de<br>partidas</div>
<svg class="abs" style="left:570.8px;top:176.5px" width="11" height="13" viewBox="0 0 12 14"><rect x=".5" y="1.5" width="10.5" height="12" rx="1" fill="#e4e4e4" stroke="#c4c4c4" stroke-width=".6"/><rect x=".5" y="1.5" width="10.5" height="2.6" fill="#f0a030"/><path d="M2.5 6.5h6.5M2.5 8.5h6.5M2.5 10.5h6.5M4.5 5.5v7M7 5.5v7" stroke="#bdbdbd" stroke-width=".6"/></svg>
<div class="btn" style="left:621.6px;top:171px;width:49.4px;height:23.2px;background:#3d3d0a">Crear Nueva<br>Partida</div>
<div class="btn" style="left:676.7px;top:171px;width:55.6px;height:23.2px;background:#ffff99;color:#111">Crear Partida<br>con Ref.</div>

<!-- PROYECTO ACTUAL -->
<div class="grp" style="left:745.3px;top:136.8px;width:65.2px;height:60.8px"></div>
<div class="gl" style="left:775.4px;top:133px;width:50px;line-height:9.2px;font-size:6.5px">PROYECTO<br>ACTUAL</div>
<div class="btn" style="left:753.7px;top:152px;width:49px;height:18px;background:#e2e2e2;color:#111">Exportar</div>
<div class="btn" style="left:753.7px;top:174.6px;width:49px;height:17.8px;background:#c0c0ff;color:#111">Importar</div>

<!-- FUNCIONES OPCIONALES -->
<div class="grp" style="left:819.6px;top:136.8px;width:146.6px;height:60.8px"></div>
<div class="gl" style="left:892.2px;top:132.6px;width:126.5px;font-size:6.5px">FUNCIONES &nbsp;OPCIONALES</div>
<div class="btn" style="left:827px;top:144.8px;width:63.2px;height:22px;background:#c00000">Borrar Filas con<br>inf. Word</div>
<div class="btn" style="left:894.8px;top:143.5px;width:63.4px;height:22.5px;background:#804000">Borrar Filas<br>vacías</div>
<div class="btn" style="left:826.2px;top:171.9px;width:63.4px;height:22.2px;background:#008080">Borrar Filas con<br>inf. Similar</div>
<div class="btn w" style="left:894.8px;top:171px;width:63.4px;height:23.2px">Borrar datos<br>columna Word</div>
<div id="grid">
<div class="hrow" style="left:46.0px;top:230.0px;width:684.5px;height:11.2px"></div>
<div class="hc" style="left:46.0px;top:230.0px;width:68.0px;height:11.2px"><span>Item</span></div>
<div class="hc" style="left:114.0px;top:230.0px;width:268.6px;height:11.2px"><span>Partida</span></div>
<div class="hc" style="left:382.6px;top:230.0px;width:33.1px;height:11.2px"><span>Und.</span></div>
<div class="hc" style="left:415.7px;top:230.0px;width:55.5px;height:11.2px"><span>Descripción</span></div>
<div class="hc" style="left:471.2px;top:230.0px;width:73.4px;height:11.2px"><span>Unidad de Medida</span></div>
<div class="hc" style="left:544.6px;top:230.0px;width:63.7px;height:11.2px"><span>Forma de Pago</span></div>
<div class="hc" style="left:608.3px;top:230.0px;width:69.1px;height:11.2px"><span>Similar</span></div>
<div class="hc" style="left:677.4px;top:230.0px;width:53.1px;height:11.2px"><span>Word</span></div>
<div class="gc" style="left:471.2px;top:274.8px;width:137.1px;height:11.2px"></div>
<div class="gc" style="left:677.4px;top:274.8px;width:53.1px;height:11.2px"></div>
<div class="gc" style="left:471.2px;top:297.2px;width:137.1px;height:11.2px"></div>
<div class="gc" style="left:471.2px;top:319.6px;width:137.1px;height:11.2px"></div>
<div class="gc" style="left:471.2px;top:330.8px;width:137.1px;height:11.2px"></div>
<div class="gc" style="left:471.2px;top:342.0px;width:137.1px;height:11.2px"></div>
<div class="gc" style="left:471.2px;top:375.6px;width:137.1px;height:11.2px"></div>
<div class="gc" style="left:471.2px;top:431.6px;width:137.1px;height:11.2px"></div>
<div class="gc" style="left:677.4px;top:431.6px;width:53.1px;height:11.2px"></div>
<div class="gc" style="left:471.2px;top:442.8px;width:137.1px;height:11.2px"></div>
<div class="gc" style="left:677.4px;top:442.8px;width:53.1px;height:11.2px"></div>
<div class="gc" style="left:471.2px;top:465.2px;width:137.1px;height:11.2px"></div>
<div class="gc" style="left:471.2px;top:476.4px;width:137.1px;height:11.2px"></div>
<div class="gc" style="left:471.2px;top:487.6px;width:137.1px;height:11.2px"></div>
<div class="gc" style="left:471.2px;top:498.8px;width:137.1px;height:11.2px"></div>
<div class="gc" style="left:471.2px;top:521.2px;width:137.1px;height:11.2px"></div>
<div class="gc" style="left:471.2px;top:532.4px;width:137.1px;height:11.2px"></div>
<div class="gc" style="left:471.2px;top:543.6px;width:137.1px;height:11.2px"></div>
<div class="gc" style="left:471.2px;top:566.0px;width:137.1px;height:11.2px"></div>
<div class="gc" style="left:471.2px;top:577.2px;width:137.1px;height:11.2px"></div>
<div class="gc" style="left:677.4px;top:577.2px;width:53.1px;height:11.2px"></div>
<div class="hl" style="top:240.7px;left:46.0px;width:684.5px"></div>
<div class="hl" style="top:251.9px;left:46.0px;width:684.5px"></div>
<div class="hl" style="top:263.1px;left:46.0px;width:684.5px"></div>
<div class="hl" style="top:274.3px;left:46.0px;width:684.5px"></div>
<div class="hl" style="top:285.5px;left:46.0px;width:684.5px"></div>
<div class="hl" style="top:296.7px;left:46.0px;width:684.5px"></div>
<div class="hl" style="top:307.9px;left:46.0px;width:684.5px"></div>
<div class="hl" style="top:319.1px;left:46.0px;width:684.5px"></div>
<div class="hl" style="top:330.3px;left:46.0px;width:684.5px"></div>
<div class="hl" style="top:341.5px;left:46.0px;width:684.5px"></div>
<div class="hl" style="top:352.7px;left:46.0px;width:684.5px"></div>
<div class="hl" style="top:363.9px;left:46.0px;width:684.5px"></div>
<div class="hl" style="top:375.1px;left:46.0px;width:684.5px"></div>
<div class="hl" style="top:386.3px;left:46.0px;width:684.5px"></div>
<div class="hl" style="top:397.5px;left:46.0px;width:684.5px"></div>
<div class="hl" style="top:408.7px;left:46.0px;width:684.5px"></div>
<div class="hl" style="top:419.9px;left:46.0px;width:684.5px"></div>
<div class="hl" style="top:431.1px;left:46.0px;width:684.5px"></div>
<div class="hl" style="top:442.3px;left:46.0px;width:684.5px"></div>
<div class="hl" style="top:453.5px;left:46.0px;width:684.5px"></div>
<div class="hl" style="top:464.7px;left:46.0px;width:684.5px"></div>
<div class="hl" style="top:475.9px;left:46.0px;width:684.5px"></div>
<div class="hl" style="top:487.1px;left:46.0px;width:684.5px"></div>
<div class="hl" style="top:498.3px;left:46.0px;width:684.5px"></div>
<div class="hl" style="top:509.5px;left:46.0px;width:684.5px"></div>
<div class="hl" style="top:520.7px;left:46.0px;width:684.5px"></div>
<div class="hl" style="top:531.9px;left:46.0px;width:684.5px"></div>
<div class="hl" style="top:543.1px;left:46.0px;width:684.5px"></div>
<div class="hl" style="top:554.3px;left:46.0px;width:684.5px"></div>
<div class="hl" style="top:565.5px;left:46.0px;width:684.5px"></div>
<div class="hl" style="top:576.7px;left:46.0px;width:684.5px"></div>
<div class="hl" style="top:587.9px;left:46.0px;width:684.5px"></div>
<div class="hl" style="top:229.5px;left:46.0px;width:684.5px"></div>
<div class="vl" style="left:45.5px;top:230.0px;height:370.0px"></div>
<div class="vl" style="left:113.5px;top:230.0px;height:370.0px"></div>
<div class="vl" style="left:382.1px;top:230.0px;height:370.0px"></div>
<div class="vl" style="left:415.2px;top:230.0px;height:370.0px"></div>
<div class="vl" style="left:470.7px;top:230.0px;height:370.0px"></div>
<div class="vl" style="left:544.1px;top:230.0px;height:370.0px"></div>
<div class="vl" style="left:607.8px;top:230.0px;height:370.0px"></div>
<div class="vl" style="left:676.9px;top:230.0px;height:370.0px"></div>
<div class="vl" style="left:730.0px;top:230.0px;height:370.0px"></div>
<div class="ci l1" style="top:241.2px"><span>01</span></div>
<div class="cp l1" style="top:241.2px"><span>SISTEMA DE AGUA POTABLE</span></div>
<div class="tri" style="top:241.2px"></div>
<div class="ci l2" style="top:252.4px"><span>01.01</span></div>
<div class="cp l2" style="top:252.4px"><span>OBRAS PROVISIONALES, TRABAJOS PRELIMINARES</span></div>
<div class="tri" style="top:252.4px"></div>
<div class="ci l3" style="top:263.6px"><span>01.01.01</span></div>
<div class="cp l3" style="top:263.6px"><span>CONSTRUCCIONES PROVISIONALES</span></div>
<div class="ci l0" style="top:274.8px"><span>01.01.01.01</span></div>
<div class="cp l0" style="top:274.8px"><span>CARTEL DE OBRA DE 4.80x3.60 m, EN GIGANTOGRAFIA</span></div>
<div class="cu" style="top:274.8px"><span>UND</span></div>
<div class="ci l3" style="top:286.0px"><span>01.01.02</span></div>
<div class="cp l3" style="top:286.0px"><span>TRABAJOS PRELIMINARES</span></div>
<div class="ci l0" style="top:297.2px"><span>01.01.02.01</span></div>
<div class="cp l0" style="top:297.2px"><span>MOVILIZACIÓN Y DESMOVILIZACIÓN DE EQUIPO Y MAQUINARIA</span></div>
<div class="cu" style="top:297.2px"><span>GLB</span></div>
<div class="ci l2" style="top:308.4px"><span>01.02</span></div>
<div class="cp l2" style="top:308.4px"><span>SEGURIDAD Y SALUD</span></div>
<div class="tri" style="top:308.4px"></div>
<div class="ci l0" style="top:319.6px"><span>01.02.01</span></div>
<div class="cp l0" style="top:319.6px"><span>ELABORACIÓN, IMPLEMENTACIÓN Y ADMINISTRACIÓN DEL PLAN DE SEGURIDAD</span></div>
<div class="cu" style="top:319.6px"><span>GLB</span></div>
<div class="ci l0" style="top:330.8px"><span>01.02.02</span></div>
<div class="cp l0" style="top:330.8px"><span>EQUIPOS DE PROTECCIÓN PERSONAL (EPP)</span></div>
<div class="cu" style="top:330.8px"><span>GLB</span></div>
<div class="ci l0" style="top:342.0px"><span>01.02.03</span></div>
<div class="cp l0" style="top:342.0px"><span>SEÑALIZACIÓN TEMPORAL DE SEGURIDAD</span></div>
<div class="cu" style="top:342.0px"><span>GLB</span></div>
<div class="ci l2" style="top:353.2px"><span>01.03</span></div>
<div class="cp l2" style="top:353.2px"><span>MITIGACIÓN DE IMPACTO AMBIENTAL</span></div>
<div class="tri" style="top:353.2px"></div>
<div class="ci l3" style="top:364.4px"><span>01.03.01</span></div>
<div class="cp l3" style="top:364.4px"><span>PROGRAMA DE MANEJO DE RESIDUOS SÓLIDOS Y LÍQUIDOS</span></div>
<div class="ci l0" style="top:375.6px"><span>01.03.01.01</span></div>
<div class="cp l0" style="top:375.6px"><span>IMPLEMENTACIÓN DE CILINDROS PROVISIONALES&nbsp; PARA ALMACENAR RESIDUOS</span></div>
<div class="cu" style="top:375.6px"><span>UND</span></div>
<div class="ci l2" style="top:386.8px"><span>01.04</span></div>
<div class="cp l2" style="top:386.8px"><span>SISTEMA DE AGUA POTABLE</span></div>
<div class="tri" style="top:386.8px"></div>
<div class="ci l3" style="top:398.0px"><span>01.04.01</span></div>
<div class="cp l3" style="top:398.0px"><span>CAPTACIÓN</span></div>
<div class="ci l4" style="top:409.2px"><span>01.04.01.01</span></div>
<div class="cp l4" style="top:409.2px"><span>CAPTACIÓN DE LADERA TIPO I -&nbsp; (02 UND)</span></div>
<div class="ci l5" style="top:420.4px"><span>01.04.01.01.01</span></div>
<div class="cp l5" style="top:420.4px"><span>TRABAJOS&nbsp; PRELIMINARES</span></div>
<div class="ci l0" style="top:431.6px"><span>01.04.01.01.01.01</span></div>
<div class="cp l0" style="top:431.6px"><span>LIMPIEZA DE TERRENO MANUAL</span></div>
<div class="cu" style="top:431.6px"><span>M2</span></div>
<div class="ci l0" style="top:442.8px"><span>01.04.01.01.01.02</span></div>
<div class="cp l0" style="top:442.8px"><span>TRAZO Y REPLANTEO PRELIMINAR</span></div>
<div class="cu" style="top:442.8px"><span>M2</span></div>
<div class="ci l5" style="top:454.0px"><span>01.04.01.01.02</span></div>
<div class="cp l5" style="top:454.0px"><span>MOVIMIENTO DE TIERRAS</span></div>
<div class="ci l0" style="top:465.2px"><span>01.04.01.01.02.01</span></div>
<div class="cp l0" style="top:465.2px"><span>EXCAVACIÓN MANUAL EN TERRENO NATURAL</span></div>
<div class="cu" style="top:465.2px"><span>M3</span></div>
<div class="ci l0" style="top:476.4px"><span>01.04.01.01.02.02</span></div>
<div class="cp l0" style="top:476.4px"><span>RELLENO CON MATERIAL PROPIO</span></div>
<div class="cu" style="top:476.4px"><span>M3</span></div>
<div class="ci l0" style="top:487.6px"><span>01.04.01.01.02.03</span></div>
<div class="cp l0" style="top:487.6px"><span>COLOCACIÓN DE AFIRMADO</span></div>
<div class="cu" style="top:487.6px"><span>M2</span></div>
<div class="ci l0" style="top:498.8px"><span>01.04.01.01.02.04</span></div>
<div class="cp l0" style="top:498.8px"><span>ELIMINACIÓN DE MATERIAL EXCEDENTE D=30mt</span></div>
<div class="cu" style="top:498.8px"><span>M3</span></div>
<div class="ci l5" style="top:510.0px"><span>01.04.01.01.03</span></div>
<div class="cp l5" style="top:510.0px"><span>&nbsp;OBRAS DE CONCRETO SIMPLE</span></div>
<div class="ci l0" style="top:521.2px"><span>01.04.01.01.03.01</span></div>
<div class="cp l0" style="top:521.2px"><span>CONCRETO SIMPLE 1:8 + 30% PM</span></div>
<div class="cu" style="top:521.2px"><span>M3</span></div>
<div class="ci l0" style="top:532.4px"><span>01.04.01.01.03.02</span></div>
<div class="cp l0" style="top:532.4px"><span>CONCRETO SIMPLE F'C=140 KG/CM2</span></div>
<div class="cu" style="top:532.4px"><span>M2</span></div>
<div class="ci l0" style="top:543.6px"><span>01.04.01.01.03.03</span></div>
<div class="cp l0" style="top:543.6px"><span>ENCOFRADO Y DESENCOFRADO</span></div>
<div class="cu" style="top:543.6px"><span>M2</span></div>
<div class="ci l5" style="top:554.8px"><span>01.04.01.01.04</span></div>
<div class="cp l5" style="top:554.8px"><span>OBRAS DE CONCRETO ARMADO</span></div>
<div class="ci l0" style="top:566.0px"><span>01.04.01.01.04.01</span></div>
<div class="cp l0" style="top:566.0px"><span>CONCRETO F'C=175 KG/CM2</span></div>
<div class="cu" style="top:566.0px"><span>M3</span></div>
<div class="ci l0" style="top:577.2px"><span>01.04.01.01.04.02</span></div>
<div class="cp l0" style="top:577.2px"><span>ENCOFRADO Y DESENCOFRADO</span></div>
<div class="cu" style="top:577.2px"><span>M2</span></div>
<div class="cs" style="top:577.2px"><span>01.04.01.01.03.03</span></div>
<div class="sel" style="left:113.0px;top:285.0px;width:269.6px;height:12.9px"></div><div class="selh" style="left:381.0px;top:296.0px"></div>
</div>
</div>
<div class="abs" style="left:0;top:129.8px;width:1.1px;height:455.5px;background:#c6c6c6"></div>
<div id="sbar"></div>
<div class="abs" style="left:0;top:598.6px;width:1024px;height:12.4px;background:#4a4a4a"></div>
<div class="abs" style="left:5.9px;top:586.3px;width:41px;height:12.4px;background:#656565"></div>
<svg class="abs" style="left:11px;top:588.5px" width="18" height="7" viewBox="0 0 18 7" fill="#8c8c8c"><path d="M4.2.8v5.4L1.2 3.5zM13.8.8v5.4l3-2.7z"/></svg>
<div class="stab" style="left:47px;width:63.5px;background:linear-gradient(#fdf6f6,#f7c8c8 45%,#f09a9a);color:#1e7145;font-weight:bold;border-bottom:1.2px solid #1e7145;letter-spacing:-.15px">Sistema-ACUS</div>
<div class="stab" style="left:111.3px;width:60.2px;background:#ffff00;color:#333">Base-Partidas</div>
<div class="stab" style="left:172.5px;width:34.5px;background:#00b050;color:#14301f">F1-S10</div>
<div class="stab" style="left:208.3px;width:49px;background:#000">F2-General</div>
<div class="stab" style="left:259.2px;width:61px;background:#0000ff">Configuración</div>
<div class="stab" style="left:322px;width:42.6px;background:#7030a0">Similares</div>
<div class="stab" style="left:366.2px;width:37.8px;background:#0070c0">Reporte</div>
<div class="abs" style="left:404px;top:586.3px;width:28px;height:12.3px;background:#686868"></div>
<svg class="abs" style="left:420.5px;top:588px" width="8" height="8" viewBox="0 0 8 8" fill="none" stroke="#7e7e7e" stroke-width=".7"><circle cx="4" cy="4" r="3.4"/><path d="M4 2.2v3.6M2.2 4h3.6"/></svg>
<svg class="abs" style="left:900.4px;top:589px" width="2" height="7" viewBox="0 0 2 7" fill="#c8c8c8"><circle cx="1" cy="1" r=".6"/><circle cx="1" cy="3.4" r=".6"/><circle cx="1" cy="5.8" r=".6"/></svg>
<div class="abs" style="left:908.4px;top:586.7px;width:105.7px;height:10.2px;background:#3a3a3a;border-radius:5.1px"></div>
<div class="abs" style="left:918.7px;top:589.2px;width:49.4px;height:5.2px;background:#c6c6c6;border-radius:2.6px"></div>
<svg class="abs" style="left:910.5px;top:589.3px" width="101" height="5" viewBox="0 0 101 5" fill="#e6e6e6"><path d="M4.4.2v4.6L.6 2.5zM96.6.2v4.6l3.8-2.3z"/></svg>
<div id="vscroll"></div>
<div class="abs" style="left:1015.7px;top:130px;width:9.6px;height:455.6px;background:#3a3a3a;border-radius:4.8px"></div>
<div class="abs" style="left:1018.1px;top:140.2px;width:4.9px;height:405.5px;background:#c6c6c6;border-radius:2.450px"></div>
<svg class="abs" style="left:1017.6px;top:133px" width="6" height="50" viewBox="0 0 6 50" fill="#e6e6e6"><path d="M.4 4.2h5L2.9.4z"/></svg>
<svg class="abs" style="left:1017.6px;top:578.9px" width="6" height="5" viewBox="0 0 6 5" fill="#e6e6e6"><path d="M.4.4h5L2.9 4.2z"/></svg>
<!-- status bar -->
<div class="tt" style="left:6.3px;top:603px;font-size:6.6px;color:#ececec;letter-spacing:-.1px">Listo</div>
<svg class="abs" style="left:31px;top:601.2px" width="10" height="10" viewBox="0 0 10 10" fill="none" stroke="#e0e0e0" stroke-width=".7"><rect x=".5" y=".8" width="8.6" height="7.4" rx=".6"/><path d="M.5 2.6h8.6"/><circle cx="5.8" cy="6" r="2.2" fill="#484848"/><circle cx="5.8" cy="6" r=".8" fill="#e0e0e0" stroke="none"/></svg>
<svg class="abs" style="left:50px;top:600.8px" width="9" height="10" viewBox="0 0 9 10" fill="none" stroke="#e6e6e6" stroke-width=".8"><circle cx="4.3" cy="1.4" r=".9"/><path d="M.6 3.2c2.4.8 5 .8 7.4 0M4.3 3.8v2.4M4.3 6.2L2.4 9.4M4.3 6.2l1.9 3.2"/></svg>
<div class="tt" style="left:60.8px;top:603px;font-size:6.450px;color:#ececec;letter-spacing:-.12px">Accesibilidad: es necesario investigar</div>
<div class="abs" style="left:848.4px;top:598.6px;width:23.5px;height:12.4px;background:#626262"></div>
<svg class="abs" style="left:855.6px;top:601.4px" width="9" height="8" viewBox="0 0 9 8" fill="none" stroke="#f0f0f0" stroke-width=".7"><rect x=".4" y=".4" width="8.2" height="7.2"/><path d="M.4 2.8h8.2M.4 5.2h8.2M3.1.4v7.2M5.9.4v7.2"/></svg>
<svg class="abs" style="left:879.6px;top:601.4px" width="9" height="8" viewBox="0 0 9 8" fill="none" stroke="#dcdcdc" stroke-width=".7"><rect x=".4" y=".4" width="8.2" height="7.2"/><rect x="2.6" y="1.8" width="3.8" height="4.4"/></svg>
<svg class="abs" style="left:903.6px;top:601.4px" width="10" height="8" viewBox="0 0 10 8" fill="none" stroke="#dcdcdc" stroke-width=".7"><rect x=".4" y=".4" width="8.8" height="7.2"/><path d="M3.4.4v3.4h5.8M5.6.4v3.4"/></svg>
<div class="abs" style="left:924px;top:605.4px;width:4px;height:.8px;background:#b0b0b0"></div>
<div class="abs" style="left:931.4px;top:605.5px;width:59.6px;height:.7px;background:#b0b0b0"></div>
<div class="abs" style="left:959.6px;top:602.2px;width:2.8px;height:7px;background:#d6d6d6;border-radius:.6px"></div>
<div class="abs" style="left:994px;top:605.4px;width:4px;height:.8px;background:#b0b0b0"></div>
<div class="abs" style="left:995.6px;top:603.8px;width:.8px;height:4px;background:#b0b0b0"></div>
<div class="tt" style="left:1006.4px;top:603.7px;font-size:6.4px;color:#ececec;letter-spacing:-.2px">100%</div>
</body></html>
